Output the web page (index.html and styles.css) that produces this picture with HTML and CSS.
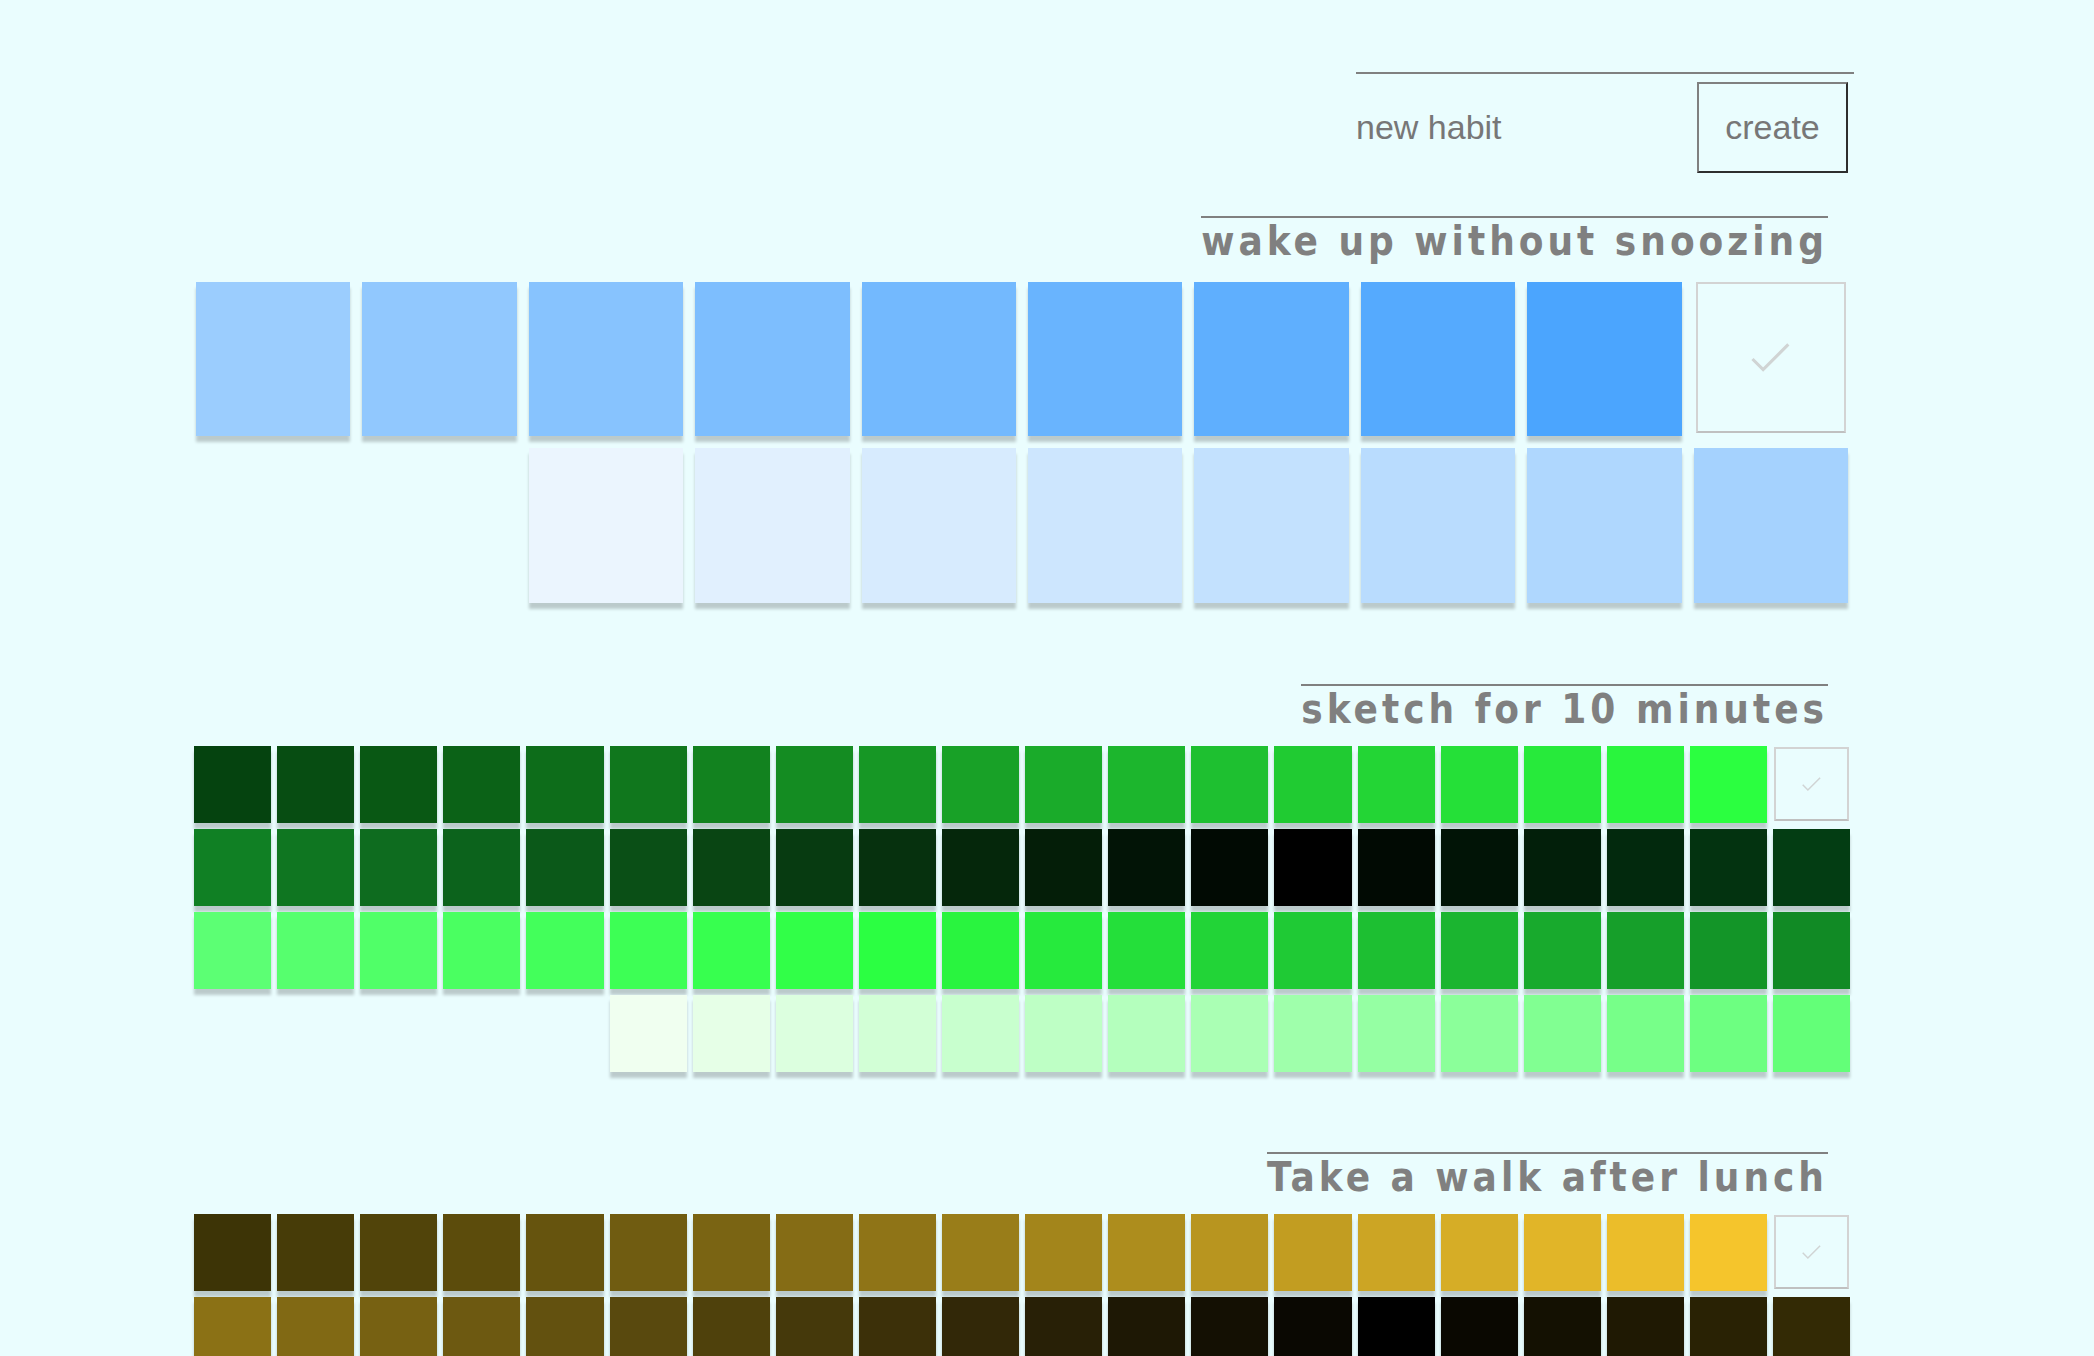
FILE: index.html
```html
<!DOCTYPE html>
<html lang="en">
<head>
<meta charset="utf-8">
<title>habits</title>
<link rel="stylesheet" href="styles.css">
</head>
<body>
<main class="page">
  <div class="new-habit-row">
    <form class="new-habit">
      <input class="habit-input" type="text" placeholder="new habit">
      <button class="create-btn" type="button">create</button>
    </form>
  </div>

  <section class="habit habit-first">
    <div class="habit-head"><h2 class="habit-title">wake up without snoozing</h2></div>
    <div class="grid grid-10">
      <div class="day" style="background:#9bcdfe"></div>
      <div class="day" style="background:#91c8fe"></div>
      <div class="day" style="background:#87c3fe"></div>
      <div class="day" style="background:#7dbefe"></div>
      <div class="day" style="background:#73b9fe"></div>
      <div class="day" style="background:#69b4fe"></div>
      <div class="day" style="background:#5faffe"></div>
      <div class="day" style="background:#55aafe"></div>
      <div class="day" style="background:#4ba5fe"></div>
      <div class="check"><svg viewBox="0 0 40 30"><path d="M1.5 16.5 L12.5 27.5 L38.5 1.5"/></svg></div>
      <div class="blank"></div>
      <div class="blank"></div>
      <div class="day" style="background:#ebf5fe"></div>
      <div class="day" style="background:#e1f0fe"></div>
      <div class="day" style="background:#d7ebfe"></div>
      <div class="day" style="background:#cde6fe"></div>
      <div class="day" style="background:#c3e1fe"></div>
      <div class="day" style="background:#b9dcfe"></div>
      <div class="day" style="background:#afd7fe"></div>
      <div class="day" style="background:#a5d2fe"></div>
    </div>
  </section>

  <section class="habit habit-second">
    <div class="habit-head"><h2 class="habit-title">sketch for 10 minutes</h2></div>
    <div class="grid grid-20">
      <div class="day" style="background:#05430f"></div>
      <div class="day" style="background:#074d12"></div>
      <div class="day" style="background:#095814"></div>
      <div class="day" style="background:#0b6217"></div>
      <div class="day" style="background:#0d6d1a"></div>
      <div class="day" style="background:#10771d"></div>
      <div class="day" style="background:#12821f"></div>
      <div class="day" style="background:#148c22"></div>
      <div class="day" style="background:#169725"></div>
      <div class="day" style="background:#18a127"></div>
      <div class="day" style="background:#1aab2a"></div>
      <div class="day" style="background:#1cb62d"></div>
      <div class="day" style="background:#1ec030"></div>
      <div class="day" style="background:#20cb32"></div>
      <div class="day" style="background:#23d535"></div>
      <div class="day" style="background:#25e038"></div>
      <div class="day" style="background:#27ea3b"></div>
      <div class="day" style="background:#29f53d"></div>
      <div class="day" style="background:#2bff40"></div>
      <div class="check"><svg viewBox="0 0 40 30"><path d="M1.5 16.5 L12.5 27.5 L38.5 1.5"/></svg></div>

      <div class="day" style="background:#108024"></div>
      <div class="day" style="background:#0f7621"></div>
      <div class="day" style="background:#0e6c1f"></div>
      <div class="day" style="background:#0c631c"></div>
      <div class="day" style="background:#0b5919"></div>
      <div class="day" style="background:#0a4f16"></div>
      <div class="day" style="background:#094513"></div>
      <div class="day" style="background:#073b11"></div>
      <div class="day" style="background:#06310e"></div>
      <div class="day" style="background:#05270b"></div>
      <div class="day" style="background:#041e08"></div>
      <div class="day" style="background:#021406"></div>
      <div class="day" style="background:#010a03"></div>
      <div class="day" style="background:#000000"></div>
      <div class="day" style="background:#010a03"></div>
      <div class="day" style="background:#011406"></div>
      <div class="day" style="background:#021f0a"></div>
      <div class="day" style="background:#02290d"></div>
      <div class="day" style="background:#033310"></div>
      <div class="day" style="background:#033d13"></div>

      <div class="day" style="background:#5cff74"></div>
      <div class="day" style="background:#56ff6e"></div>
      <div class="day" style="background:#50ff68"></div>
      <div class="day" style="background:#4aff61"></div>
      <div class="day" style="background:#43ff5b"></div>
      <div class="day" style="background:#3dff55"></div>
      <div class="day" style="background:#37ff4f"></div>
      <div class="day" style="background:#31ff48"></div>
      <div class="day" style="background:#2bff42"></div>
      <div class="day" style="background:#29f43f"></div>
      <div class="day" style="background:#26ea3d"></div>
      <div class="day" style="background:#24df3a"></div>
      <div class="day" style="background:#22d437"></div>
      <div class="day" style="background:#1fca35"></div>
      <div class="day" style="background:#1dbf32"></div>
      <div class="day" style="background:#1bb530"></div>
      <div class="day" style="background:#18aa2d"></div>
      <div class="day" style="background:#169f2a"></div>
      <div class="day" style="background:#139528"></div>
      <div class="day" style="background:#118a25"></div>

      <div class="blank"></div>
      <div class="blank"></div>
      <div class="blank"></div>
      <div class="blank"></div>
      <div class="blank"></div>
      <div class="day" style="background:#f0fff0"></div>
      <div class="day" style="background:#e6ffe7"></div>
      <div class="day" style="background:#dcffdf"></div>
      <div class="day" style="background:#d2ffd6"></div>
      <div class="day" style="background:#c8ffce"></div>
      <div class="day" style="background:#beffc5"></div>
      <div class="day" style="background:#b4ffbd"></div>
      <div class="day" style="background:#aaffb4"></div>
      <div class="day" style="background:#9fffab"></div>
      <div class="day" style="background:#95ffa3"></div>
      <div class="day" style="background:#8bff9a"></div>
      <div class="day" style="background:#81ff92"></div>
      <div class="day" style="background:#77ff89"></div>
      <div class="day" style="background:#6dff81"></div>
      <div class="day" style="background:#63ff78"></div>
    </div>
  </section>

  <section class="habit habit-third">
    <div class="habit-head"><h2 class="habit-title">Take a walk after lunch</h2></div>
    <div class="grid grid-20">
      <div class="day" style="background:#3d3406"></div>
      <div class="day" style="background:#473c08"></div>
      <div class="day" style="background:#51440a"></div>
      <div class="day" style="background:#5c4c0c"></div>
      <div class="day" style="background:#66540e"></div>
      <div class="day" style="background:#705c11"></div>
      <div class="day" style="background:#7a6413"></div>
      <div class="day" style="background:#856c15"></div>
      <div class="day" style="background:#8f7417"></div>
      <div class="day" style="background:#997d19"></div>
      <div class="day" style="background:#a3851b"></div>
      <div class="day" style="background:#ad8d1d"></div>
      <div class="day" style="background:#b8951f"></div>
      <div class="day" style="background:#c29d21"></div>
      <div class="day" style="background:#cca524"></div>
      <div class="day" style="background:#d6ad26"></div>
      <div class="day" style="background:#e1b528"></div>
      <div class="day" style="background:#ebbd2a"></div>
      <div class="day" style="background:#f5c52c"></div>
      <div class="check"><svg viewBox="0 0 40 30"><path d="M1.5 16.5 L12.5 27.5 L38.5 1.5"/></svg></div>

      <div class="day" style="background:#8b7115"></div>
      <div class="day" style="background:#816914"></div>
      <div class="day" style="background:#776112"></div>
      <div class="day" style="background:#6d5911"></div>
      <div class="day" style="background:#63510f"></div>
      <div class="day" style="background:#59490e"></div>
      <div class="day" style="background:#4f410c"></div>
      <div class="day" style="background:#45390b"></div>
      <div class="day" style="background:#3c3009"></div>
      <div class="day" style="background:#322808"></div>
      <div class="day" style="background:#282006"></div>
      <div class="day" style="background:#1e1805"></div>
      <div class="day" style="background:#141003"></div>
      <div class="day" style="background:#0a0802"></div>
      <div class="day" style="background:#000000"></div>
      <div class="day" style="background:#0a0801"></div>
      <div class="day" style="background:#141102"></div>
      <div class="day" style="background:#1f1903"></div>
      <div class="day" style="background:#292204"></div>
      <div class="day" style="background:#332a05"></div>

      <div class="day" style="background:#ffe280"></div>
      <div class="day" style="background:#ffdf73"></div>
      <div class="day" style="background:#ffdc66"></div>
      <div class="day" style="background:#ffd959"></div>
      <div class="day" style="background:#fed64d"></div>
      <div class="day" style="background:#fdd342"></div>
      <div class="day" style="background:#fcd038"></div>
      <div class="day" style="background:#fbce30"></div>
      <div class="day" style="background:#facc2e"></div>
      <div class="day" style="background:#f0c42c"></div>
      <div class="day" style="background:#e6bc2a"></div>
      <div class="day" style="background:#dcb428"></div>
      <div class="day" style="background:#d2ac27"></div>
      <div class="day" style="background:#c8a425"></div>
      <div class="day" style="background:#be9c23"></div>
      <div class="day" style="background:#b49422"></div>
      <div class="day" style="background:#aa8c20"></div>
      <div class="day" style="background:#a0841e"></div>
      <div class="day" style="background:#9a7e1c"></div>
      <div class="day" style="background:#957917"></div>

      <div class="blank"></div>
      <div class="blank"></div>
      <div class="blank"></div>
      <div class="blank"></div>
      <div class="blank"></div>
      <div class="day" style="background:#fffbeb"></div>
      <div class="day" style="background:#fff9e4"></div>
      <div class="day" style="background:#fff8dd"></div>
      <div class="day" style="background:#fff6d6"></div>
      <div class="day" style="background:#fff5cf"></div>
      <div class="day" style="background:#fff3c8"></div>
      <div class="day" style="background:#fff2c1"></div>
      <div class="day" style="background:#fff0ba"></div>
      <div class="day" style="background:#ffeeb4"></div>
      <div class="day" style="background:#ffedad"></div>
      <div class="day" style="background:#ffeba6"></div>
      <div class="day" style="background:#ffea9f"></div>
      <div class="day" style="background:#ffe898"></div>
      <div class="day" style="background:#ffe791"></div>
      <div class="day" style="background:#ffe58a"></div>
    </div>
  </section>
</main>
</body>
</html>
```

FILE: styles.css
```css
html {
  scrollbar-width: none;
}

body {
  margin: 0;
  background: #eafdfe;
  font-family: "Liberation Sans", Arial, sans-serif;
}

.page {
  width: 1656px;
  margin-left: 194px;
  padding-top: 72px;
}

/* new habit form */
.new-habit-row {
  display: flex;
  justify-content: flex-end;
  margin-right: -4px;
}

.new-habit {
  width: 498px;
  box-sizing: border-box;
  display: flex;
  align-items: center;
  justify-content: space-between;
  border-top: 2px solid #808080;
  padding: 8px 6px 0 0;
  margin: 0;
}

.habit-input {
  width: 300px;
  border: none;
  outline: none;
  background: transparent;
  padding: 0;
  margin: 0;
  font-family: "Liberation Sans", Arial, sans-serif;
  font-size: 34px;
  color: #777;
}

.habit-input::placeholder {
  color: #777;
  opacity: 1;
}

.create-btn {
  width: 151px;
  height: 91px;
  box-sizing: border-box;
  margin: 0;
  padding: 0;
  background: transparent;
  border: 2px solid;
  border-color: #808080 #2e2e2e #2e2e2e #808080;
  font-family: "Liberation Sans", Arial, sans-serif;
  font-size: 34px;
  color: #777;
}

/* habits */
.habit-head {
  display: flex;
  justify-content: flex-end;
  padding-right: 22px;
}

.habit-first .habit-head {
  margin-top: 43px;
}

.habit-title {
  margin: 0;
  border-top: 2px solid #808080;
  padding: 2px 0 1px;
  font-family: "DejaVu Sans Condensed", "DejaVu Sans", sans-serif;
  font-stretch: condensed;
  font-weight: bold;
  font-size: 40px;
  line-height: 42px;
  letter-spacing: 4px;
  color: #808080;
}

.grid {
  display: grid;
}

.grid-10 {
  grid-template-columns: repeat(10, 1fr);
  gap: 12px;
  margin: 19px 2px 81px;
}

.grid-20 {
  grid-template-columns: repeat(20, 1fr);
  gap: 6px;
  margin: 15px 0 80px;
}

.day,
.blank {
  aspect-ratio: 1;
}

.day {
  box-shadow: 0 6px 3px rgba(0, 0, 0, 0.2);
}

.check {
  box-sizing: border-box;
  border: 2px solid #d3d3d3;
  border-bottom-color: #c0c0c0;
  display: flex;
  align-items: center;
  justify-content: center;
}

.grid-10 .check {
  margin: 0 2px 3px;
}

.grid-20 .check {
  margin: 1px 1px 2px;
}

.check svg {
  display: block;
  width: 26.5%;
  height: auto;
  fill: none;
  stroke: #d0d4d4;
  stroke-width: 3.2;
}
```
